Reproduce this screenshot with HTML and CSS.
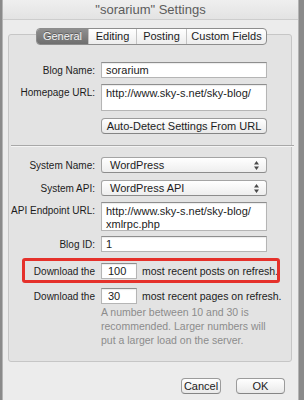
FILE: index.html
```html
<!DOCTYPE html>
<html lang="en">
<head>
    <meta charset="UTF-8">
    <meta name="viewport" content="width=device-width, initial-scale=1.0">
    <title>"sorarium" Settings</title>
    <link rel="stylesheet" href="styles.css">
</head>
<body>
    <div class="window">
        <div class="titlebar">"sorarium" Settings</div>

        <div class="content">
            <div class="tab-box">
                <div class="tabs">
                    <span class="tab selected">General</span>
                    <span class="tab">Editing</span>
                    <span class="tab">Posting</span>
                    <span class="tab">Custom Fields</span>
                </div>

                <div class="form">
                    <div class="row">
                        <label>Blog Name:</label>
                        <div class="field">sorarium</div>
                    </div>
                    <div class="row row-top row-homepage">
                        <label>Homepage URL:</label>
                        <div class="field area">http://www.sky-s.net/sky-blog/</div>
                    </div>
                    <div class="row row-detect">
                        <label></label>
                        <button class="push wide">Auto-Detect Settings From URL</button>
                    </div>

                    <div class="separator"></div>

                    <div class="row">
                        <label>System Name:</label>
                        <div class="popup">WordPress
                            <svg class="arrows" width="5" height="9" viewBox="0 0 5 9"><path d="M2.5 0L5 3.5H0Z M2.5 9L5 5.5H0Z" fill="#4a4a4a"/></svg>
                        </div>
                    </div>
                    <div class="row row-sysapi">
                        <label>System API:</label>
                        <div class="popup">WordPress API
                            <svg class="arrows" width="5" height="9" viewBox="0 0 5 9"><path d="M2.5 0L5 3.5H0Z M2.5 9L5 5.5H0Z" fill="#4a4a4a"/></svg>
                        </div>
                    </div>
                    <div class="row row-top row-endpoint">
                        <label>API Endpoint URL:</label>
                        <div class="field area tall">http://www.sky-s.net/sky-blog/<br>xmlrpc.php</div>
                    </div>
                    <div class="row row-blogid">
                        <label>Blog ID:</label>
                        <div class="field">1</div>
                    </div>
                    <div class="row row-posts highlight">
                        <label>Download the</label>
                        <div class="field small">100</div>
                        <span class="after">most recent posts on refresh.</span>
                    </div>
                    <div class="row row-pages">
                        <label>Download the</label>
                        <div class="field small">30</div>
                        <span class="after">most recent pages on refresh.</span>
                    </div>
                    <p class="hint">A number between 10 and 30 is<br>recommended. Larger numbers will<br>put a larger load on the server.</p>
                </div>
            </div>

            <div class="actions">
                <button class="push">Cancel</button>
                <button class="push ok">OK</button>
            </div>
        </div>
    </div>
</body>
</html>
```

FILE: styles.css
```css
body {
    margin: 0;
    width: 304px;
    height: 400px;
    overflow: hidden;
    background-color: #8a8a8a;
    font-family: 'Liberation Sans', Arial, sans-serif;
    font-size: 10.5px;
    color: #1c1c1c;
}

.window {
    margin-left: 2px;
    width: 297px;
    height: 400px;
    background-color: #ececec;
    border-left: 1px solid #b4b4b4;
    border-right: 1px solid #b4b4b4;
    box-sizing: border-box;
}

.titlebar {
    height: 19px;
    line-height: 20px;
    text-align: center;
    font-size: 13px;
    color: #5c5c5c;
    background: linear-gradient(#efefef, #e3e3e3);
    border-bottom: 1px solid #cdcdcd;
}

.content {
    padding: 14px 6px 0 5px;
}

/* Tab view */
.tab-box {
    height: 328px;
    background-color: #e3e3e3;
    border: 1px solid #c6c6c6;
    border-radius: 3px;
    box-sizing: border-box;
}

.tabs {
    display: flex;
    width: 229px;
    height: 15px;
    margin: -7px 0 0 27px;
    border: 1px solid #8d8d8d;
    border-radius: 4px;
    background: linear-gradient(#ffffff, #ededed);
    overflow: hidden;
    font-size: 11px;
    line-height: 15px;
}

.tab {
    text-align: center;
    color: #1c1c1c;
    border-left: 1px solid #c4c4c4;
}

.tab:nth-child(1) { width: 51px; border-left: none; }
.tab:nth-child(2) { width: 47px; }
.tab:nth-child(3) { width: 49px; }
.tab:nth-child(4) { flex: 1; }

.tab.selected {
    background: linear-gradient(#8f8f8f, #6f6f6f);
    color: #f4f4f4;
    text-shadow: 0 -1px 0 rgba(0, 0, 0, 0.35);
}

/* Form rows */
.form {
    padding-top: 17px;
}

.row {
    display: flex;
    align-items: center;
    position: relative;
}

.row-top {
    align-items: flex-start;
}

.row label {
    width: 86px;
    margin-right: 6px;
    font-size: 10px;
    text-align: right;
    white-space: nowrap;
    flex-shrink: 0;
}

.row-top label {
    padding-top: 3px;
}

.field {
    width: 166px;
    height: 16px;
    box-sizing: border-box;
    padding: 0 4px;
    line-height: 15px;
    font-size: 11px;
    background-color: #ffffff;
    border: 1px solid #b5b5b5;
    border-top-color: #8e8e8e;
    box-shadow: inset 0 1px 1px rgba(0, 0, 0, 0.08);
}

.field.area {
    height: 27px;
    padding-top: 2px;
    line-height: 13px;
}

.field.tall {
    height: 29px;
}

.field.small {
    width: 36px;
    padding-left: 6px;
}

.after {
    margin-left: 5px;
    white-space: nowrap;
}

.row-homepage { margin-top: 6px; }
.row-detect { margin-top: 7px; }
.row-sysapi { margin-top: 7px; }
.row-endpoint { margin-top: 6px; }
.row-blogid { margin-top: 5px; }
.row-posts { margin-top: 11px; }
.row-pages { margin-top: 9px; }

.separator {
    height: 1px;
    margin: 11px 0 10px 2px;
    width: 283px;
    background-color: #a8a8a8;
    border-bottom: 1px solid #f4f4f4;
}

/* Red highlight drawn over the posts row */
.highlight::after {
    content: "";
    position: absolute;
    left: 13px;
    top: -5px;
    width: 252px;
    height: 19px;
    border: 3px solid #e5312b;
    border-radius: 3px;
}

/* Pop-up buttons */
.popup {
    position: relative;
    width: 166px;
    height: 16px;
    box-sizing: border-box;
    padding-left: 8px;
    line-height: 14px;
    font-size: 11px;
    border: 1px solid #a4a4a4;
    border-bottom-color: #8c8c8c;
    border-radius: 3px;
    background: linear-gradient(#ffffff, #eeeeee);
}

.arrows {
    position: absolute;
    right: 7px;
    top: 3px;
}

/* Push buttons */
.push {
    height: 16px;
    padding: 0;
    font-family: 'Liberation Sans', Arial, sans-serif;
    font-size: 11px;
    line-height: 14px;
    color: #1c1c1c;
    border: 1px solid #9b9b9b;
    border-bottom-color: #858585;
    border-radius: 4px;
    background: linear-gradient(#ffffff, #e9e9e9);
}

.push.wide {
    width: 166px;
}

.hint {
    margin: 1px 0 0 92px;
    line-height: 14px;
    white-space: nowrap;
    color: #8c8c8c;
}

.actions {
    display: flex;
    justify-content: flex-end;
    gap: 15px;
    padding: 16px 7px 0 0;
}

.actions .push {
    width: 40px;
}

.actions .push.ok {
    width: 49px;
}
```
